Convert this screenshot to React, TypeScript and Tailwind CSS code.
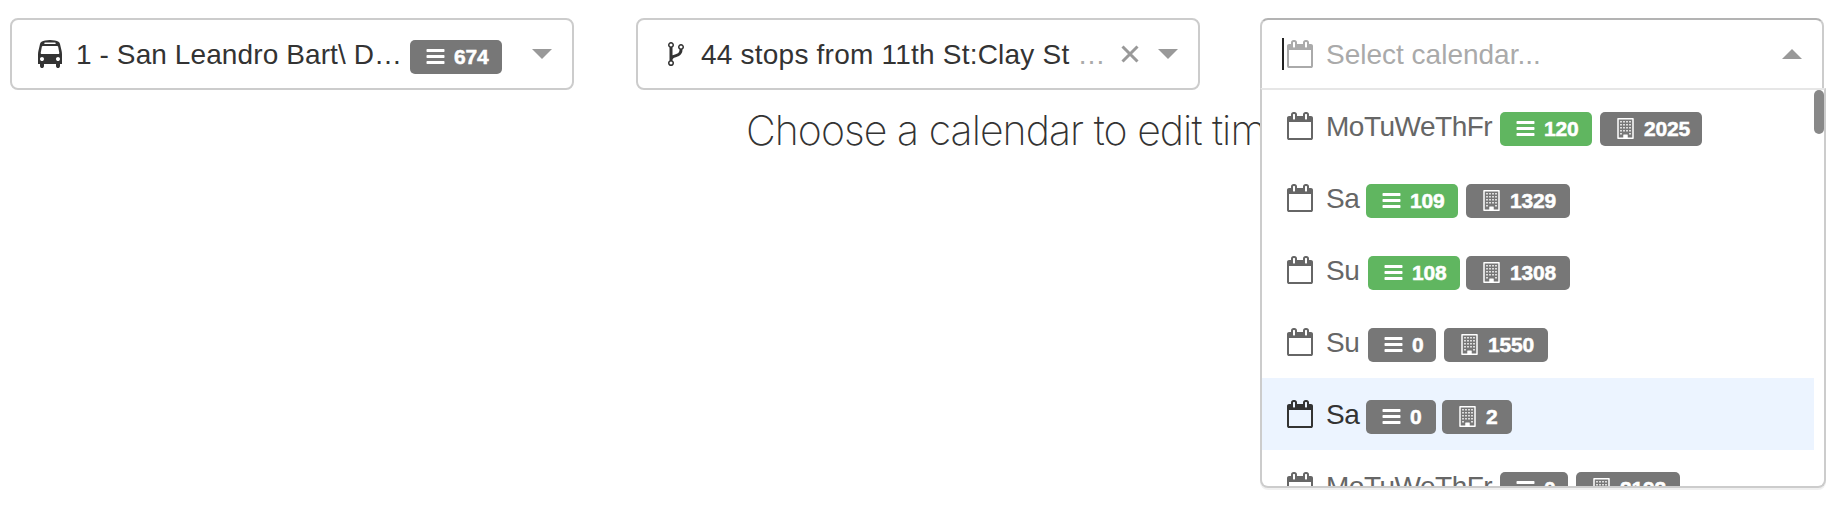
import React from "react";

type IconProps = { d: string; className?: string };

const Icon = ({ d, className = "" }: IconProps) => (
  <svg viewBox="0 0 1792 1792" fill="currentColor" className={`shrink-0 ${className}`}>
    <path fillRule="evenodd" d={d} />
  </svg>
);

const BUS =
  "M512 1216q0-53-37.5-90.5t-90.5-37.5-90.5 37.5-37.5 90.5 37.5 90.5 90.5 37.5 90.5-37.5 37.5-90.5zm1024 0q0-53-37.5-90.5t-90.5-37.5-90.5 37.5-37.5 90.5 37.5 90.5 90.5 37.5 90.5-37.5 37.5-90.5zm-46-396l-72-384q-5-23-22.5-37.5t-40.5-14.5h-918q-23 0-40.5 14.5t-22.5 37.5l-72 384q-5 30 14 53t49 23h1062q30 0 49-23t14-53zm-226-612q0-20-14-34t-34-14h-640q-20 0-34 14t-14 34 14 34 34 14h640q20 0 34-14t14-34zm400 725v603h-128v128q0 53-37.5 90.5t-90.5 37.5-90.5-37.5-37.5-90.5v-128h-768v128q0 53-37.5 90.5t-90.5 37.5-90.5-37.5-37.5-90.5v-128h-128v-603q0-112 25-223l103-454q9-78 97.5-137t230-89 312.5-30 312.5 30 230 89 97.5 137l105 454q23 102 23 223z";
const FORK =
  "M672 1472q0-40-28-68t-68-28-68 28-28 68 28 68 68 28 68-28 28-68zm0-1152q0-40-28-68t-68-28-68 28-28 68 28 68 68 28 68-28 28-68zm640 128q0-40-28-68t-68-28-68 28-28 68 28 68 68 28 68-28 28-68zm96 0q0 52-26 96.5t-70 69.5q-2 287-226 414-67 38-203 81-128 40-169.5 71t-41.5 100v26q44 25 70 69.5t26 96.5q0 80-56 136t-136 56-136-56-56-136q0-52 26-96.5t70-69.5v-820q-44-25-70-69.5t-26-96.5q0-80 56-136t136-56 136 56 56 136q0 52-26 96.5t-70 69.5v497q54-26 154-57 55-17 87.5-29.5t70.5-31 59-39.5 40.5-51 28-69.5 8.5-91.5q-44-25-70-69.5t-26-96.5q0-80 56-136t136-56 136 56 56 136z";
const CALENDAR =
  "M192 1664h1408v-1024h-1408v1024zm384-1216v-288q0-14-9-23t-23-9h-64q-14 0-23 9t-9 23v288q0 14 9 23t23 9h64q14 0 23-9t9-23zm768 0v-288q0-14-9-23t-23-9h-64q-14 0-23 9t-9 23v288q0 14 9 23t23 9h64q14 0 23-9t9-23zm384-64v1280q0 52-38 90t-90 38h-1408q-52 0-90-38t-38-90v-1280q0-52 38-90t90-38h128v-96q0-66 47-113t113-47h64q66 0 113 47t47 113v96h384v-96q0-66 47-113t113-47h64q66 0 113 47t47 113v96h128q52 0 90 38t38 90z";
const BARS =
  "M1664 1344v128q0 26-19 45t-45 19h-1408q-26 0-45-19t-19-45v-128q0-26 19-45t45-19h1408q26 0 45 19t19 45zm0-512v128q0 26-19 45t-45 19h-1408q-26 0-45-19t-19-45v-128q0-26 19-45t45-19h1408q26 0 45 19t19 45zm0-512v128q0 26-19 45t-45 19h-1408q-26 0-45-19t-19-45v-128q0-26 19-45t45-19h1408q26 0 45 19t19 45z";

const WINDOWS = [256, 512, 768, 1024, 1280]
  .flatMap((y) => [448, 704, 960, 1216].map((x) => ({ x, y })))
  .filter(({ x, y }) => y < 1280 || x === 448 || x === 1216)
  .map(({ x, y }) => `M${x} ${y}h128v128h-128z`)
  .join("");
const BUILDING = `M256 0h1280q64 0 64 64v1664q0 64-64 64h-1280q-64 0-64-64v-1664q0-64 64-64zM320 128v1536h384v-224q0-32 32-32h320q32 0 32 32v224h384v-1536z${WINDOWS}`;

type BadgeProps = { icon: string; value: string; green?: boolean; className: string };

const Badge = ({ icon, value, green = false, className }: BadgeProps) => (
  <span
    className={`mt-1.5 flex h-[34px] shrink-0 items-center rounded-[5px] pl-[12px] text-[21px] font-bold leading-none tracking-[-0.2px] text-white ${
      green ? "bg-[#60b660]" : "bg-[#777]"
    } ${className}`}
  >
    <span className="mr-[5px] flex w-[27px] shrink-0 justify-center">
      <Icon d={icon} className="mb-0.5 size-[21px]" />
    </span>
    <span className="pb-[2px] [-webkit-text-stroke:0.5px_white]">{value}</span>
  </span>
);

type Row = {
  name: string;
  nameWidth: string;
  trips: string;
  tripsWidth: string;
  stops: string;
  stopsWidth: string;
  green?: boolean;
  active?: boolean;
};

const rows: Row[] = [
  { name: "MoTuWeThFr", nameWidth: "w-[174px] tracking-[-0.5px]", trips: "120", tripsWidth: "w-[92px] mr-2", stops: "2025", stopsWidth: "w-[102px]", green: true },
  { name: "Sa", nameWidth: "w-[40px] tracking-[-0.5px]", trips: "109", tripsWidth: "w-[92px] mr-2", stops: "1329", stopsWidth: "w-[104px]", green: true },
  { name: "Su", nameWidth: "w-[42px] tracking-[-0.5px]", trips: "108", tripsWidth: "w-[92px] mr-1.5", stops: "1308", stopsWidth: "w-[104px]", green: true },
  { name: "Su", nameWidth: "w-[42px] tracking-[-0.5px]", trips: "0", tripsWidth: "w-[68px] mr-2", stops: "1550", stopsWidth: "w-[104px]" },
  { name: "Sa", nameWidth: "w-[40px] tracking-[-0.5px]", trips: "0", tripsWidth: "w-[70px] mr-1.5", stops: "2", stopsWidth: "w-[70px]", active: true },
  { name: "MoTuWeThFr", nameWidth: "w-[174px] tracking-[-0.5px]", trips: "0", tripsWidth: "w-[68px] mr-2", stops: "2192", stopsWidth: "w-[104px]" },
];

const Option = ({ row }: { row: Row }) => (
  <div
    className={`mr-2.5 flex h-[72px] items-center pl-6 ${
      row.active ? "bg-[#ecf4ff] text-[#333]" : "text-[#666]"
    }`}
  >
    <Icon d={CALENDAR} className="mr-3 size-7" />
    <span className={`shrink-0 pt-0.5 ${row.nameWidth}`}>{row.name}</span>
    <Badge icon={BARS} value={row.trips} green={row.green} className={row.tripsWidth} />
    <Badge icon={BUILDING} value={row.stops} className={row.stopsWidth} />
  </div>
);

const Arrow = ({ up = false }: { up?: boolean }) => (
  <svg viewBox="0 0 20 10" className="h-2.5 w-5 shrink-0 fill-[#999]">
    <path d={up ? "M0 10L10 0L20 10z" : "M0 0H20L10 10z"} />
  </svg>
);

export default function App() {
  return (
    <div
      className="relative h-[508px] w-[1840px] overflow-hidden bg-white pt-[18px] text-[28px] leading-none text-[#333]"
      style={{ fontFamily: '"Liberation Sans", Arial, sans-serif' }}
    >
      <div className="flex items-start pl-2.5">
        <div className="flex h-[72px] w-[564px] items-center rounded-lg border-2 border-[#ccc] bg-white pl-6">
          <Icon d={BUS} className="mr-3 size-7" />
          <span className="w-[334px] shrink-0 whitespace-nowrap pt-0.5 tracking-[0.1px]">1 - San Leandro Bart\ D…</span>
          <Badge icon={BARS} value="674" className="w-[92px]" />
          <div className="ml-[30px]">
            <Arrow />
          </div>
        </div>

        <div className="ml-[62px] flex h-[72px] w-[564px] items-center rounded-lg border-2 border-[#ccc] bg-white pl-6">
          <Icon d={FORK} className="mr-[11px] size-7" />
          <span className="w-[401px] shrink-0 whitespace-nowrap pt-0.5 tracking-[0.22px]">
            44 stops from 11th St:Clay St <span className="text-[#aaa]">…</span>
          </span>
          <svg viewBox="0 0 18 18" className="ml-[19px] size-[18px] shrink-0" fill="none" stroke="#999" strokeWidth="3">
            <path d="M1.5 1.5L16.5 16.5M16.5 1.5L1.5 16.5" />
          </svg>
          <div className="ml-[19px]">
            <Arrow />
          </div>
        </div>

        <div className="relative z-10 ml-[60px] w-[566px]">
          <div className="flex h-[72px] w-[564px] items-center rounded-t-lg border-2 border-[#ccc] border-t-[#b3b3b3] bg-white pl-5 text-[#aaa]">
            <span className="h-8 w-0.5 shrink-0 bg-[#222]" />
            <Icon d={CALENDAR} className="ml-0.5 mr-3 size-7" />
            <span className="w-[456px] shrink-0 pt-0.5">Select calendar...</span>
            <Arrow up />
          </div>
          <div className="-mt-0.5 h-[400px] overflow-hidden rounded-b-lg border-2 border-[#ccc] border-t-[#e6e6e6] bg-white shadow-[0_2px_0_rgba(0,0,0,0.06)]">
            <div className="flex">
              <div className="w-[562px] shrink-0">
                {rows.map((row, i) => (
                  <Option key={i} row={row} />
                ))}
              </div>
              <div className="-ml-2.5 h-11 w-2.5 shrink-0 rounded-[5px] bg-[#888]" />
            </div>
          </div>
        </div>
      </div>

      <h3
        className="-mt-[378px] ml-[746px] whitespace-nowrap text-[41px] font-extralight leading-none tracking-[-0.95px]"
        style={{ fontFamily: 'Inter, Roboto, sans-serif' }}
      >
        Choose a calendar to edit timetables
      </h3>
    </div>
  );
}
